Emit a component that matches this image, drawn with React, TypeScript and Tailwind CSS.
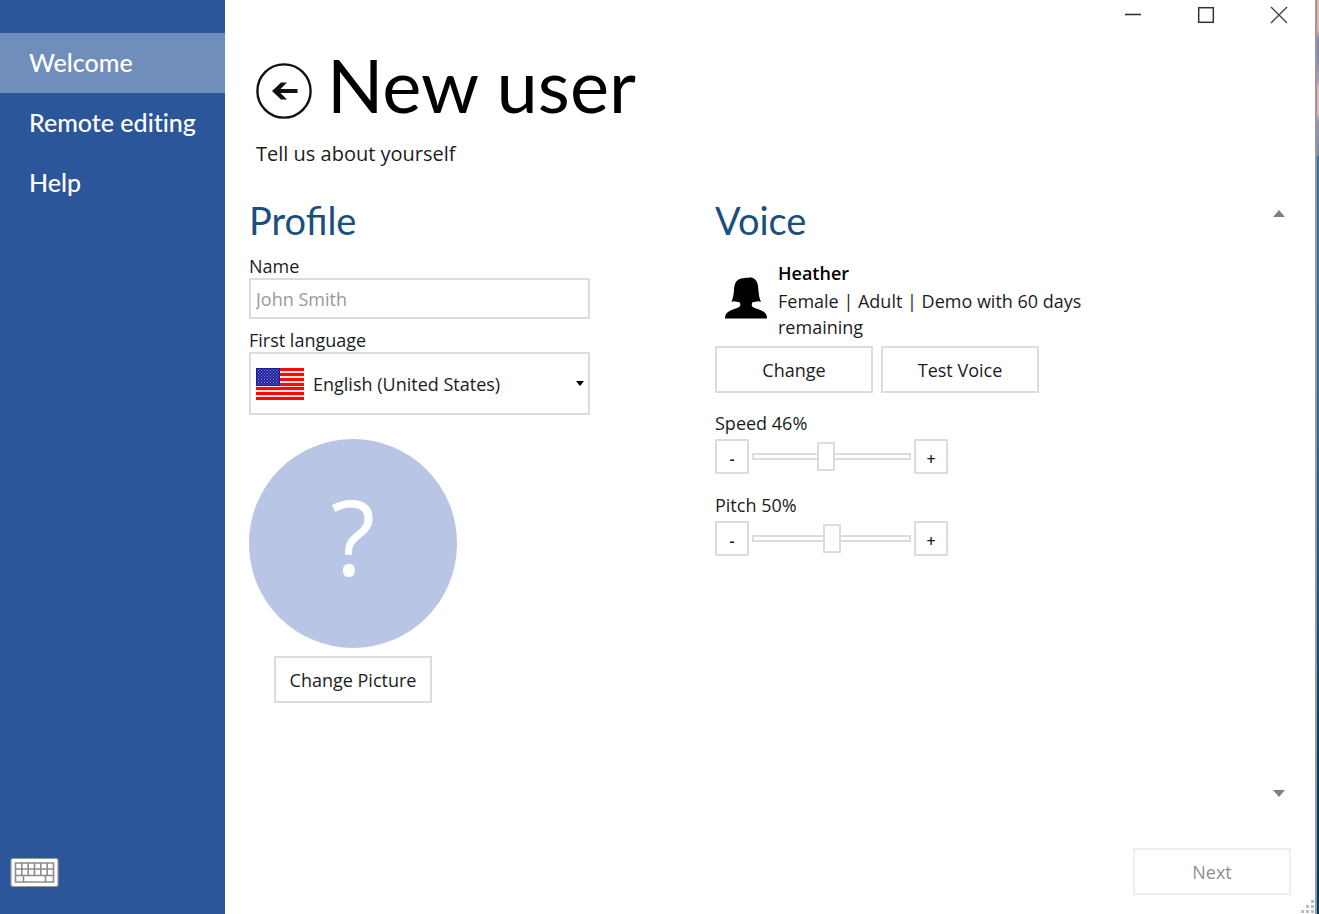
import { useState } from "react";

const boxButton =
  "h-[47px] w-[158px] border-2 border-[#dcdcdc] bg-white text-lg text-[#1c1c1c] disabled:border-[#eeeeee] disabled:text-[#909090]";

function Flag() {
  return (
    <svg viewBox="0 0 48 32" className="h-8 w-12 shrink-0" aria-hidden="true">
      <defs>
        <pattern id="stars" width="3" height="3" patternUnits="userSpaceOnUse">
          <rect width="3" height="3" fill="#1c1c9c" />
          <circle cx="1" cy="1" r="0.6" fill="#b4b4e4" />
          <circle cx="2.5" cy="2.5" r="0.5" fill="#b4b4e4" />
        </pattern>
      </defs>
      <rect width="48" height="32" fill="#ffe4e4" />
      {[0, 5, 10, 15, 19, 24, 29].map((y) => (
        <rect key={y} y={y} width="48" height="3" fill="#ff0808" />
      ))}
      <rect width="24" height="18" fill="url(#stars)" />
      <rect x="0.5" y="0.5" width="23" height="17" fill="none" stroke="#1c1c9c" />
    </svg>
  );
}

function Keyboard() {
  return (
    <svg viewBox="0 0 50 31" className="h-[31px] w-[50px]" aria-hidden="true">
      <rect x="2" y="1.5" width="47" height="28" rx="2" fill="#fff" stroke="#9a9a9a" strokeWidth="1.2" />
      <g fill="none" stroke="#8c8c8c" strokeWidth="1.6">
        <path d="M6.500 6H44.500V25H6.500Z M6.500 12H44.500 M6.500 18.500H44.500" />
        <path d="M12.800 6V18.500 M19.200 6V18.500 M25.500 6V18.500 M31.800 6V18.500 M38.200 6V18.500 M14.500 18.500V25 M36.500 18.500V25" />
      </g>
    </svg>
  );
}

function Person() {
  return (
    <svg viewBox="0 0 42 42" className="h-[42px] w-[42px] shrink-0" aria-hidden="true">
      <path d="M19 1.300C21 .6 22 .8 22.800 1C25 .2 28 .5 30 2.500C33 5 33 9 33.500 14C33.900 19 34.500 21.500 36 25L33.500 24.300L27.500 25.200C26.500 27 26.600 28.500 27.500 29.800C31 32 36 32.500 39 35C41.500 37 42 39 42 41.500H0C0 39 .5 37 3 35C6 32.500 11 32 14.500 29.800C15.700 28.500 15.700 27 14.500 25.200L8.500 24.300L6.500 25C8.300 20 8.700 17 9 13C9.400 6 12 .8 19 1.300Z" />
    </svg>
  );
}

function Setting({ id, label, initial }: { id: string; label: string; initial: number }) {
  const [value, setValue] = useState(initial);
  const stepButton =
    "flex h-[35px] w-[34px] items-center justify-center border-2 border-[#dcdcdc] bg-white pt-1 text-base font-semibold leading-none text-[#1c1c1c]";
  return (
    <div>
      <label htmlFor={id} className="block h-7 text-lg leading-6">
        {label} {value}%
      </label>
      <div className="flex items-center gap-[3px]">
        <button aria-label={`Decrease ${label}`} className={stepButton} onClick={() => setValue(Math.max(0, value - 1))}>
          -
        </button>
        <input
          id={id}
          type="range"
          min={0}
          max={100}
          value={value}
          onChange={(e) => setValue(Number(e.target.value))}
          className="h-[29px] w-[159px] appearance-none bg-transparent [&::-webkit-slider-runnable-track]:h-[7px] [&::-webkit-slider-runnable-track]:border-2 [&::-webkit-slider-runnable-track]:border-[#dcdcdc] [&::-webkit-slider-thumb]:-mt-[13px] [&::-webkit-slider-thumb]:h-[29px] [&::-webkit-slider-thumb]:w-[18px] [&::-webkit-slider-thumb]:appearance-none [&::-webkit-slider-thumb]:border-2 [&::-webkit-slider-thumb]:border-[#dcdcdc] [&::-webkit-slider-thumb]:bg-white"
        />
        <button aria-label={`Increase ${label}`} className={stepButton} onClick={() => setValue(Math.min(100, value + 1))}>
          +
        </button>
      </div>
    </div>
  );
}

export default function App() {
  return (
    <div className="flex min-h-screen bg-white font-['Open_Sans','Noto_Sans',sans-serif] text-[#1c1c1c]">
      <nav className="flex w-[225px] shrink-0 flex-col bg-[#2b579a] pt-[33px] font-['Lato',sans-serif] text-[25px] font-medium text-white [font-variant-ligatures:none]">
        <a href="#welcome" className="flex h-[60px] items-center bg-[#6f8ebb] pl-[29px]">Welcome</a>
        <a href="#remote" className="flex h-[60px] items-center pl-[29px]">Remote editing</a>
        <a href="#help" className="flex h-[60px] items-center pl-[29px]">Help</a>
        <button aria-label="On-screen keyboard" className="mt-auto mb-[26px] ml-[9px] self-start">
          <Keyboard />
        </button>
      </nav>

      <div className="relative flex min-w-0 flex-1 flex-col">
        <div className="flex h-[29px] justify-end">
          <button aria-label="Minimize" className="flex w-[73px] items-center justify-center">
            <svg viewBox="0 0 18 18" className="h-[18px] w-[18px]"><path d="M1 8.500H17" stroke="#333" strokeWidth="1.600" /></svg>
          </button>
          <button aria-label="Maximize" className="flex w-[73px] items-center justify-center">
            <svg viewBox="0 0 18 18" className="h-[18px] w-[18px]"><rect x="1.700" y="1.700" width="14.600" height="14.600" fill="none" stroke="#333" strokeWidth="1.500" /></svg>
          </button>
          <button aria-label="Close" className="flex w-[73px] items-center justify-center">
            <svg viewBox="0 0 18 18" className="h-[18px] w-[18px]"><path d="M1 1L17 17M17 1L1 17" stroke="#444" strokeWidth="1.400" /></svg>
          </button>
        </div>

        <header className="h-[171px] pl-[31px]">
          <div className="flex h-[111px] items-center gap-[15px]">
            <button aria-label="Back" className="mt-[13px]">
              <svg viewBox="0 0 56 56" className="h-14 w-14">
                <circle cx="28" cy="28" r="26.600" fill="none" stroke="#111" strokeWidth="2.400" />
                <path d="M16 28L25 19.500H31L24.500 26H41.500V30H24.500L31 36.500H25Z" fill="#111" />
              </svg>
            </button>
            <h1 className="font-['Lato',sans-serif] text-[74px] leading-none text-black">New user</h1>
          </div>
          <p className="text-xl leading-7">Tell us about yourself</p>
        </header>

        <main className="flex flex-1 justify-between pr-[30px] pl-6">
          <div className="grid min-w-0 flex-1 grid-cols-[466px_1fr]">
            <section>
              <h2 className="h-[54px] font-['Lato',sans-serif] text-[38px] leading-10 text-[#1a4f7d]">Profile</h2>
              <label htmlFor="name" className="block h-6 text-lg leading-6">Name</label>
              <input
                id="name"
                placeholder="John Smith"
                className="block h-[41px] w-[341px] border-2 border-[#dcdcdc] px-[5px] text-lg placeholder:text-[#999999]"
              />
              <label htmlFor="language" className="mt-[9px] block h-6 text-lg leading-6">First language</label>
              <div className="relative flex h-[63px] w-[341px] items-center border-2 border-[#dcdcdc] pl-[5px]">
                <Flag />
                <select id="language" className="h-full flex-1 appearance-none bg-transparent pl-[9px] text-lg">
                  <option>English (United States)</option>
                </select>
                <svg viewBox="0 0 8 5" className="pointer-events-none absolute right-1 h-[5px] w-2"><path d="M0 0H8L4 5Z" /></svg>
              </div>
              <div className="mt-6 flex w-[208px] flex-col items-center gap-2">
                <div className="flex h-[209px] w-full items-center justify-center rounded-full bg-[#b8c5e5] pb-4">
                  <span className="text-[104px] leading-none text-white">?</span>
                </div>
                <button className={boxButton}>Change Picture</button>
              </div>
            </section>

            <section>
              <h2 className="h-14 font-['Lato',sans-serif] text-[38px] leading-10 text-[#1a4f7d]">Voice</h2>
              <div className="flex items-center gap-[11px] pl-[10px]">
                <Person />
                <div className="w-[310px] pt-1 text-lg leading-[26px]">
                  <p className="mb-0.5 font-semibold text-black">Heather</p>
                  <p>Female | Adult | Demo with 60 days remaining</p>
                </div>
              </div>
              <div className="mt-1.5 flex gap-2">
                <button className={boxButton}>Change</button>
                <button className={boxButton}>Test Voice</button>
              </div>
              <div className="mt-[18px] flex flex-col gap-[19px]">
                <Setting id="speed" label="Speed" initial={46} />
                <Setting id="pitch" label="Pitch" initial={50} />
              </div>
            </section>
          </div>
          <div className="flex flex-col justify-between pt-[10px] pb-[5px]">
            <button aria-label="Scroll up">
              <svg viewBox="0 0 12 7" className="h-[7px] w-3"><path d="M0 7L6 0L12 7Z" fill="#808080" /></svg>
            </button>
            <button aria-label="Scroll down">
              <svg viewBox="0 0 12 7" className="h-[7px] w-3"><path d="M0 0L6 7L12 0Z" fill="#808080" /></svg>
            </button>
          </div>
        </main>

        <footer className="flex justify-end pt-[46px] pr-6 pb-[19px]">
          <button disabled className={boxButton}>Next</button>
        </footer>
        <svg viewBox="0 0 14 14" className="absolute right-0 bottom-0 h-3.5 w-3.5" aria-hidden="true">
          <path d="M10 0h3v3h-3zM5 5h3v3H5zM10 5h3v3h-3zM0 10h3v3H0zM5 10h3v3H5zM10 10h3v3h-3z" fill="#b5bfd0" />
        </svg>
      </div>
      <div className="w-1 shrink-0 border-l-2 border-[#999999] bg-[linear-gradient(#e5b3ae_0px,#e5b3ae_30px,#8288ad_40px,#8288ad_55px,#ad9ab8_80px,#e5b3b8_88px,#e5b3b8_114px,#9a96b8_120px,#8288ad_155px,#3a70a8_157px,#2d6c9c_400px,#003f66_770px,#003b60_914px)]" />
    </div>
  );
}
